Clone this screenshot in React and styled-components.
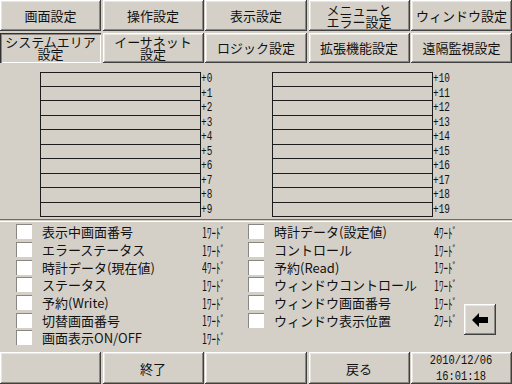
import React from "react";
import styled, { createGlobalStyle, css } from "styled-components";

const GlobalStyle = createGlobalStyle`
  html, body {
    margin: 0;
    padding: 0;
    background: #d4d0c8;
  }
  body {
    font-family: "Noto Sans CJK JP", "Liberation Sans", sans-serif;
    color: #111;
  }
`;

const tabsTop = ["画面設定", "操作設定", "表示設定", "メニューと\nエラー設定", "ウィンドウ設定"];
const tabsBottom = ["システムエリア\n設定", "イーサネット\n設定", "ロジック設定", "拡張機能設定", "遠隔監視設定"];

const leftItems = [
  ["表示中画面番号", 1],
  ["エラーステータス", 1],
  ["時計データ(現在値)", 4],
  ["ステータス", 1],
  ["予約(Write)", 1],
  ["切替画面番号", 1],
  ["画面表示ON/OFF", 1],
];

const rightItems = [
  ["時計データ(設定値)", 4],
  ["コントロール", 1],
  ["予約(Read)", 1],
  ["ウィンドウコントロール", 1],
  ["ウィンドウ画面番号", 1],
  ["ウィンドウ表示位置", 2],
];

const raised = css`
  box-shadow: inset -1px -1px #404040, inset 1px 1px #ffffff,
    inset -2px -2px #8a8782, inset 2px 2px #e8e6e1;
`;

const pressed = css`
  box-shadow: inset 1px 1px #303030, inset 2px 2px #8a8782,
    inset -1px -1px #ffffff;
`;

function App() {
  return (
    <Screen>
      <GlobalStyle />
      <TabGrid>
        {tabsTop.map((t) => (
          <Tab key={t}>{t}</Tab>
        ))}
        {tabsBottom.map((t, i) => (
          <Tab key={t} active={i === 0}>
            {t}
          </Tab>
        ))}
      </TabGrid>

      <Registers>
        <RegisterBlock>
          {Array.from({ length: 10 }, (_, i) => (
            <RegRow key={i}>
              <Cell first={i === 0} />
              <Offset>+{i}</Offset>
            </RegRow>
          ))}
        </RegisterBlock>
        <RegisterBlock>
          {Array.from({ length: 10 }, (_, i) => (
            <RegRow key={i}>
              <Cell first={i === 0} />
              <Offset>+{i + 10}</Offset>
            </RegRow>
          ))}
        </RegisterBlock>
      </Registers>

      <Divider />

      <Checklist>
        {leftItems.map(([name, n], i) => (
          <Item key={name} style={{ gridColumn: 1, gridRow: i + 1 }}>
            <Box />
            <Name>{name}</Name>
            <Words>{n}ﾜｰﾄﾞ</Words>
          </Item>
        ))}
        {rightItems.map(([name, n], i) => (
          <Item key={name} style={{ gridColumn: 2, gridRow: i + 1 }}>
            <Box />
            <Name>{name}</Name>
            <Words>{n}ﾜｰﾄﾞ</Words>
          </Item>
        ))}
        <ArrowButton>
          <svg width="16" height="14" viewBox="0 0 16 14">
            <polygon points="0,7 7,0 7,4 16,4 16,10 7,10 7,14" fill="#000" />
          </svg>
        </ArrowButton>
      </Checklist>

      <BottomBar>
        <BarButton />
        <BarButton>終了</BarButton>
        <BarButton />
        <BarButton>戻る</BarButton>
        <BarButton>
          <Clock>
            <span>2010/12/06</span>
            <span>16:01:18</span>
          </Clock>
        </BarButton>
      </BottomBar>
    </Screen>
  );
}

export default App;

const Screen = styled.div`
  width: 512px;
  height: 384px;
  display: flex;
  flex-direction: column;
  background: #d4d0c8;
  overflow: hidden;
`;

const TabGrid = styled.div`
  display: grid;
  grid-template-columns: 101px 101px 102px 101px 101px;
  grid-template-rows: 31px 30px;
  column-gap: 1.5px;
  row-gap: 2px;
  height: 63px;
`;

const Tab = styled.div`
  display: flex;
  align-items: center;
  justify-content: center;
  text-align: center;
  white-space: pre-line;
  font-size: 13px;
  line-height: 12px;
  background: #d4d0c8;
  ${(p) => (p.active ? pressed : raised)}
`;

const Registers = styled.div`
  display: grid;
  grid-template-columns: 232px 1fr;
  padding-left: 40px;
  margin-top: 9px;
`;

const RegisterBlock = styled.div`
  display: flex;
  flex-direction: column;
`;

const RegRow = styled.div`
  display: flex;
  align-items: center;
  height: 14.5px;
`;

const Cell = styled.div`
  box-sizing: border-box;
  width: 161px;
  height: 14.5px;
  border: 1px solid #1c1c1c;
  border-top: ${(p) => (p.first ? "1px solid #1c1c1c" : "none")};
  background: #d4d0c8;
`;

const Offset = styled.span`
  display: inline-block;
  font-family: "Liberation Mono", monospace;
  font-size: 13px;
  line-height: 14px;
  transform: scaleX(0.72);
  transform-origin: left center;
  color: #111;
`;

const Divider = styled.div`
  margin-top: 2px;
  height: 1px;
  border-top: 1px solid #6e6c68;
  border-bottom: 1px solid #ffffff;
`;

const Checklist = styled.div`
  display: grid;
  grid-template-columns: 232px 216px 32px;
  grid-template-rows: repeat(7, 17.7px);
  padding-left: 16px;
  padding-top: 1px;
`;

const Item = styled.div`
  display: grid;
  grid-template-columns: 16px 151px auto;
  column-gap: 10px;
  align-items: center;
`;

const Box = styled.div`
  width: 16px;
  height: 15px;
  background: #ffffff;
  box-shadow: inset 1px 1px #8a8782;
`;

const Name = styled.span`
  font-size: 13px;
  line-height: 15px;
  white-space: nowrap;
`;

const Words = styled.span`
  display: inline-block;
  font-size: 12px;
  line-height: 14px;
  white-space: nowrap;
  transform: scale(0.75, 1.15);
  transform-origin: left center;
  margin-left: -1px;
`;

const ArrowButton = styled.div`
  grid-column: 3;
  grid-row: 5 / span 3;
  align-self: center;
  width: 32px;
  height: 31px;
  display: flex;
  align-items: center;
  justify-content: center;
  background: #d4d0c8;
  margin-top: -1px;
  ${raised}
`;

const BottomBar = styled.div`
  margin-top: auto;
  display: grid;
  grid-template-columns: 101px 101px 102px 101px 101px;
  column-gap: 1.5px;
  height: 32px;
`;

const BarButton = styled.div`
  display: flex;
  align-items: center;
  justify-content: center;
  font-size: 13px;
  background: #d4d0c8;
  ${raised}
`;

const Clock = styled.div`
  display: flex;
  flex-direction: column;
  align-items: center;
  font-family: "Liberation Mono", monospace;
  font-size: 11px;
  line-height: 12.5px;
  transform: scale(0.95, 1.2);
`;
